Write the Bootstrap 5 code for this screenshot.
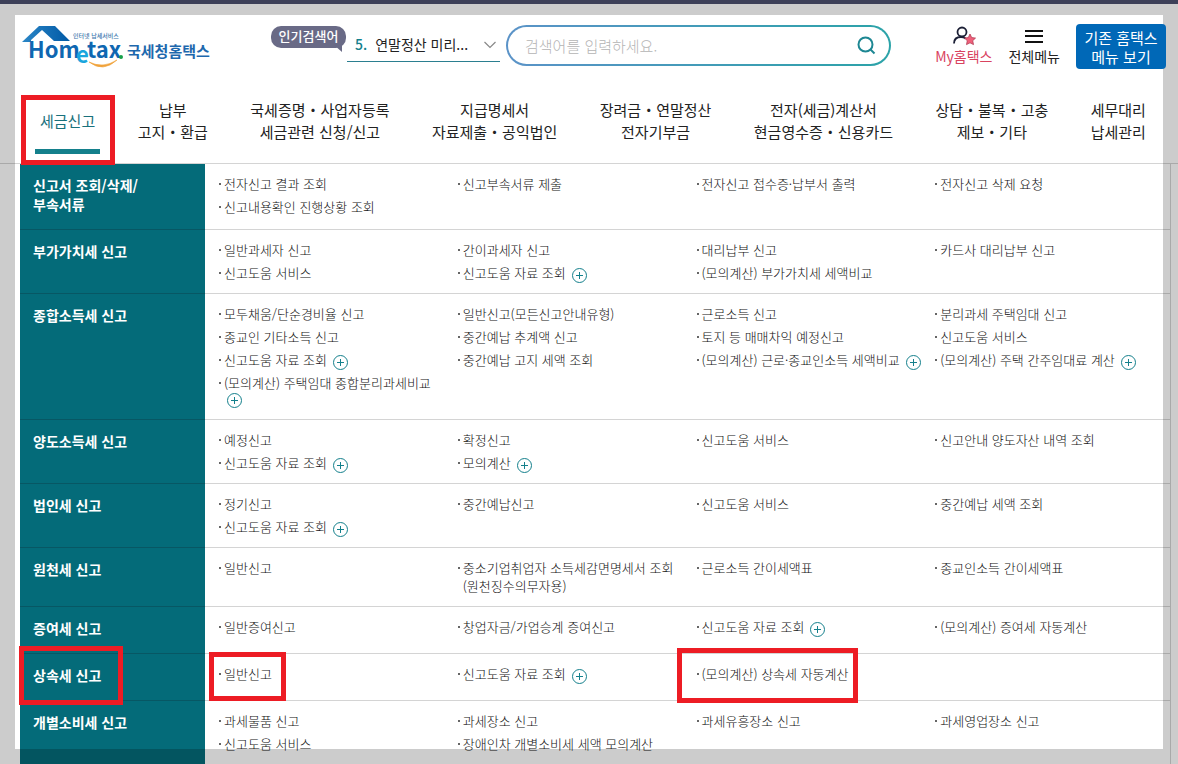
<!DOCTYPE html>
<html lang="ko">
<head>
<meta charset="utf-8">
<meta name="viewport" content="width=device-width, initial-scale=1">
<title>국세청 홈택스</title>
<link href="https://cdn.jsdelivr.net/npm/bootstrap@5.3.0/dist/css/bootstrap.min.css" rel="stylesheet">
<style>
:root{--teal:#046b79;--accent:#14808c;--mark:#ed1c24}
body{font-family:"Noto Sans CJK KR","Noto Sans",sans-serif;color:#222;background:#fff;border-top:4px solid #3d4058;overflow-x:hidden}
a{color:inherit;text-decoration:none}
/* dimmed frame round the page */
.dim-frame{position:fixed;inset:4px 0 0 0;border:15px solid rgba(0,0,0,.2);border-top-width:11px;pointer-events:none;z-index:5}
.site-head{padding:20px 12px 0 22px;height:72px}
.site-logo{width:190px;height:46px}
.hot-badge{background:#696a86;color:#fff;font-size:13px;line-height:20px;font-weight:500;border-radius:10px;width:75px;height:22px;position:relative;margin-left:59px;margin-top:2px;flex:none}
.hot-badge::after{content:"";position:absolute;right:4px;bottom:-4px;border-left:8px solid transparent;border-top:7px solid #696a86}
.hot-word{width:153px;height:38px;border:0;border-bottom:1px solid #2b7f90;background:none;padding:4px 4px 0 8px;font-size:14px;color:#222;margin-left:1px;flex:none}
.hot-word b{color:var(--accent);font-weight:500;margin-right:8px}
.search-wrap{flex:0 1 385px;height:41px;margin:1px 0 0 6px;border:2px solid transparent;border-radius:21px;background:linear-gradient(#fff,#fff) padding-box,linear-gradient(90deg,#5b93c8,#2ba3a8) border-box}
.search-wrap input{font-size:15px;font-weight:300;line-height:24px;padding:0 0 0 17px}
.search-wrap input::placeholder{color:#b4b4b4}
.search-wrap button{padding:0 13px 0 0}
.quick{font-size:14px;line-height:20px;padding-top:2px;white-space:nowrap}
.quick svg{display:block;margin:0 auto}
.my-link{color:#d9435f}
.old-btn{background:#0068b7;color:#fff;border:0;border-radius:4px;font-size:15px;line-height:19px;width:90px;height:45px;position:relative;z-index:6;padding:0}
.main-nav{padding:23px 32px 20px 40px;font-size:15px;line-height:22px;border-bottom:1px solid #d4d4d4;text-align:center;white-space:nowrap}
.nav-on{color:#19717c}
.nav-on::before{content:"";position:absolute;left:-5px;right:-5px;bottom:-22px;height:5px;background:var(--accent)}
.mega{margin:0 7px 0 20px;border-right:1px solid #d4d4d4}
.mega-row{border-bottom:1px solid #d4d4d4}
.mega-row:last-child{border-bottom:0}
.mega-title{flex:0 0 185px;background:var(--teal);color:#fff;font-size:14px;font-weight:700;line-height:19px;padding:12px 13px 15px;margin:0 0 -1px;border-bottom:1px solid #075764}
.mega-row:last-child .mega-title{margin:0;border:0}
.mega-cols{padding:9px 0 8px 10px;display:grid;grid-template-columns:repeat(4,minmax(0,1fr))}
.mega-cols ul{margin:0;padding:0 0 0 4px;list-style:none;font-size:13px;font-weight:300;color:#111;white-space:nowrap}
.mega-cols li{line-height:18px;padding:2px 0 3px 5px;position:relative}
.mega-cols li::before{content:"";position:absolute;left:0;top:10px;width:2px;height:2px;background:#666}
.mega-cols li a{display:inline-block}
.plus{display:inline-block;width:15px;height:15px;padding:0;border:1px solid var(--accent);border-radius:50%;margin:-2px 0 -3px 6px;vertical-align:-4px;background:linear-gradient(var(--accent),var(--accent)) center/7px 1px no-repeat,linear-gradient(var(--accent),var(--accent)) center/1px 7px no-repeat #fff}
.plus.below{display:block;margin:1px 0 0 3px}
/* red highlight boxes */
.marked{position:relative}
.marked::after{content:"";position:absolute;border:5px solid var(--mark);z-index:4;pointer-events:none}
.nav-on::after{inset:-15px -20px -33px -19px}
.title-mark::after{inset:-20px -22px -20px -14px}
.item-mark::after{inset:-13px -14px -18px -15px}
.calc-mark::after{inset:-17px -9px -20px -25px}
</style>
</head>
<body>
<div class="dim-frame"></div>
<header class="site-head d-flex align-items-start">
  <a href="#" aria-label="국세청 홈택스">
    <svg class="site-logo d-block" viewBox="0 0 190 46" font-family="Noto Sans CJK KR">
      <defs><linearGradient id="roof" x1="0" x2="1"><stop offset="0" stop-color="#2b86c6"/><stop offset="1" stop-color="#0059a6"/></linearGradient></defs>
      <path d="M0 18 17 2H33L48 17H32L20 6 9 16V18Z" fill="url(#roof)"/>
      <g font-weight="700" fill="#0f67b1" font-size="22">
        <text x="6" y="34">Hom</text>
        <text x="54" y="39" fill="#1ba6dd">e</text>
        <text x="65" y="34">tax</text>
      </g>
      <circle cx="99" cy="33" r="2" fill="#16a04a"/>
      <path d="M67 38Q81 49 95 36Q81 45 67 38Z" fill="#f0a23a" stroke="#f0a23a" stroke-width=".6"/>
      <text x="51" y="14" font-size="6" font-weight="500" fill="#3d78ad">인터넷 납세서비스</text>
      <text x="105" y="33" font-size="15" font-weight="700" fill="#1e68ad">국세청홈택스</text>
    </svg>
  </a>
  <div class="hot-badge text-center">인기검색어</div>
  <button type="button" class="hot-word d-flex align-items-center"><b>5.</b>연말정산 미리...
    <svg class="ms-auto" width="12" height="8" viewBox="0 0 12 8" fill="none" stroke="#888" stroke-width="1.2"><path d="m.5 1 5.500 5.500L11.500 1"/></svg>
  </button>
  <form class="search-wrap d-flex align-items-center">
    <input type="text" class="form-control border-0 bg-transparent shadow-none" placeholder="검색어를 입력하세요." aria-label="검색어">
    <button type="button" class="btn border-0" aria-label="검색"><svg class="d-block" width="19" height="19" viewBox="0 0 19 19" fill="none" stroke="#1d8793" stroke-width="2"><circle cx="8.500" cy="8.500" r="7"/><path d="m13.500 13.500 4 4"/></svg></button>
  </form>
  <div class="quick d-flex ms-auto text-center">
    <a href="#" class="my-link"><svg width="24" height="20" viewBox="0 0 24 20" fill="none"><circle cx="10" cy="6" r="4.500" stroke="#1c2036" stroke-width="1.800"/><path d="M2 17.500C2 13 5 11 9 11c2 0 3.500.5 4.500 1.500" stroke="#1c2036" stroke-width="1.800"/><path d="m18 8 1.700 3.600 3.800.5-2.800 2.600.8 3.900-3.500-1.800-3.500 1.800.8-3.900-2.800-2.600 3.800-.5Z" fill="#f0607a" stroke="#b33c55" stroke-width=".8"/></svg>My홈택스</a>
    <a href="#" class="ms-3"><svg width="18" height="20" viewBox="0 0 18 20" stroke="#111" stroke-width="2"><path d="M0 5h18M0 10h18M0 16h18"/></svg>전체메뉴</a>
  </div>
  <button type="button" class="old-btn ms-3 flex-shrink-0">기존 홈택스<br>메뉴 보기</button>
</header>
<nav class="main-nav d-flex justify-content-between align-items-center">
  <a href="#" class="nav-on marked">세금신고</a>
  <a href="#">납부<br>고지・환급</a>
  <a href="#">국세증명・사업자등록<br>세금관련 신청/신고</a>
  <a href="#">지급명세서<br>자료제출・공익법인</a>
  <a href="#">장려금・연말정산<br>전자기부금</a>
  <a href="#">전자(세금)계산서<br>현금영수증・신용카드</a>
  <a href="#">상담・불복・고충<br>제보・기타</a>
  <a href="#">세무대리<br>납세관리</a>
</nav>
<main class="mega">
  <section class="mega-row d-flex"><h2 class="mega-title">신고서 조회/삭제/<br>부속서류</h2>
    <div class="mega-cols flex-grow-1">
      <ul><li><a href="#">전자신고 결과 조회</a></li><li><a href="#">신고내용확인 진행상황 조회</a></li></ul>
      <ul><li><a href="#">신고부속서류 제출</a></li></ul>
      <ul><li><a href="#">전자신고 접수증·납부서 출력</a></li></ul>
      <ul><li><a href="#">전자신고 삭제 요청</a></li></ul>
    </div></section>
  <section class="mega-row d-flex"><h2 class="mega-title">부가가치세 신고</h2>
    <div class="mega-cols flex-grow-1">
      <ul><li><a href="#">일반과세자 신고</a></li><li><a href="#">신고도움 서비스</a></li></ul>
      <ul><li><a href="#">간이과세자 신고</a></li><li><a href="#">신고도움 자료 조회</a><button type="button" class="plus" aria-label="더보기"></button></li></ul>
      <ul><li><a href="#">대리납부 신고</a></li><li><a href="#">(모의계산) 부가가치세 세액비교</a></li></ul>
      <ul><li><a href="#">카드사 대리납부 신고</a></li></ul>
    </div></section>
  <section class="mega-row d-flex"><h2 class="mega-title">종합소득세 신고</h2>
    <div class="mega-cols flex-grow-1">
      <ul><li><a href="#">모두채움/단순경비율 신고</a></li><li><a href="#">종교인 기타소득 신고</a></li><li><a href="#">신고도움 자료 조회</a><button type="button" class="plus" aria-label="더보기"></button></li><li><a href="#">(모의계산) 주택임대 종합분리과세비교</a><button type="button" class="plus below" aria-label="더보기"></button></li></ul>
      <ul><li><a href="#">일반신고(모든신고안내유형)</a></li><li><a href="#">중간예납 추계액 신고</a></li><li><a href="#">중간예납 고지 세액 조회</a></li></ul>
      <ul><li><a href="#">근로소득 신고</a></li><li><a href="#">토지 등 매매차익 예정신고</a></li><li><a href="#">(모의계산) 근로·종교인소득 세액비교</a><button type="button" class="plus" aria-label="더보기"></button></li></ul>
      <ul><li><a href="#">분리과세 주택임대 신고</a></li><li><a href="#">신고도움 서비스</a></li><li><a href="#">(모의계산) 주택 간주임대료 계산</a><button type="button" class="plus" aria-label="더보기"></button></li></ul>
    </div></section>
  <section class="mega-row d-flex"><h2 class="mega-title">양도소득세 신고</h2>
    <div class="mega-cols flex-grow-1">
      <ul><li><a href="#">예정신고</a></li><li><a href="#">신고도움 자료 조회</a><button type="button" class="plus" aria-label="더보기"></button></li></ul>
      <ul><li><a href="#">확정신고</a></li><li><a href="#">모의계산</a><button type="button" class="plus" aria-label="더보기"></button></li></ul>
      <ul><li><a href="#">신고도움 서비스</a></li></ul>
      <ul><li><a href="#">신고안내 양도자산 내역 조회</a></li></ul>
    </div></section>
  <section class="mega-row d-flex"><h2 class="mega-title">법인세 신고</h2>
    <div class="mega-cols flex-grow-1">
      <ul><li><a href="#">정기신고</a></li><li><a href="#">신고도움 자료 조회</a><button type="button" class="plus" aria-label="더보기"></button></li></ul>
      <ul><li><a href="#">중간예납신고</a></li></ul>
      <ul><li><a href="#">신고도움 서비스</a></li></ul>
      <ul><li><a href="#">중간예납 세액 조회</a></li></ul>
    </div></section>
  <section class="mega-row d-flex"><h2 class="mega-title">원천세 신고</h2>
    <div class="mega-cols flex-grow-1">
      <ul><li><a href="#">일반신고</a></li></ul>
      <ul><li><a href="#">중소기업취업자 소득세감면명세서 조회<br>(원천징수의무자용)</a></li></ul>
      <ul><li><a href="#">근로소득 간이세액표</a></li></ul>
      <ul><li><a href="#">종교인소득 간이세액표</a></li></ul>
    </div></section>
  <section class="mega-row d-flex"><h2 class="mega-title">증여세 신고</h2>
    <div class="mega-cols flex-grow-1">
      <ul><li><a href="#">일반증여신고</a></li></ul>
      <ul><li><a href="#">창업자금/가업승계 증여신고</a></li></ul>
      <ul><li><a href="#">신고도움 자료 조회</a><button type="button" class="plus" aria-label="더보기"></button></li></ul>
      <ul><li><a href="#">(모의계산) 증여세 자동계산</a></li></ul>
    </div></section>
  <section class="mega-row d-flex"><h2 class="mega-title"><span class="marked title-mark d-inline-block">상속세 신고</span></h2>
    <div class="mega-cols flex-grow-1">
      <ul><li><a href="#" class="marked item-mark">일반신고</a></li></ul>
      <ul><li><a href="#">신고도움 자료 조회</a><button type="button" class="plus" aria-label="더보기"></button></li></ul>
      <ul><li><a href="#" class="marked calc-mark">(모의계산) 상속세 자동계산</a></li></ul>
    </div></section>
  <section class="mega-row d-flex"><h2 class="mega-title">개별소비세 신고</h2>
    <div class="mega-cols flex-grow-1">
      <ul><li><a href="#">과세물품 신고</a></li><li><a href="#">신고도움 서비스</a></li></ul>
      <ul><li><a href="#">과세장소 신고</a></li><li><a href="#">장애인차 개별소비세 세액 모의계산</a></li></ul>
      <ul><li><a href="#">과세유흥장소 신고</a></li></ul>
      <ul><li><a href="#">과세영업장소 신고</a></li></ul>
    </div></section>
</main>
<script src="https://cdn.jsdelivr.net/npm/bootstrap@5.3.0/dist/js/bootstrap.bundle.min.js"></script>
</body>
</html>
